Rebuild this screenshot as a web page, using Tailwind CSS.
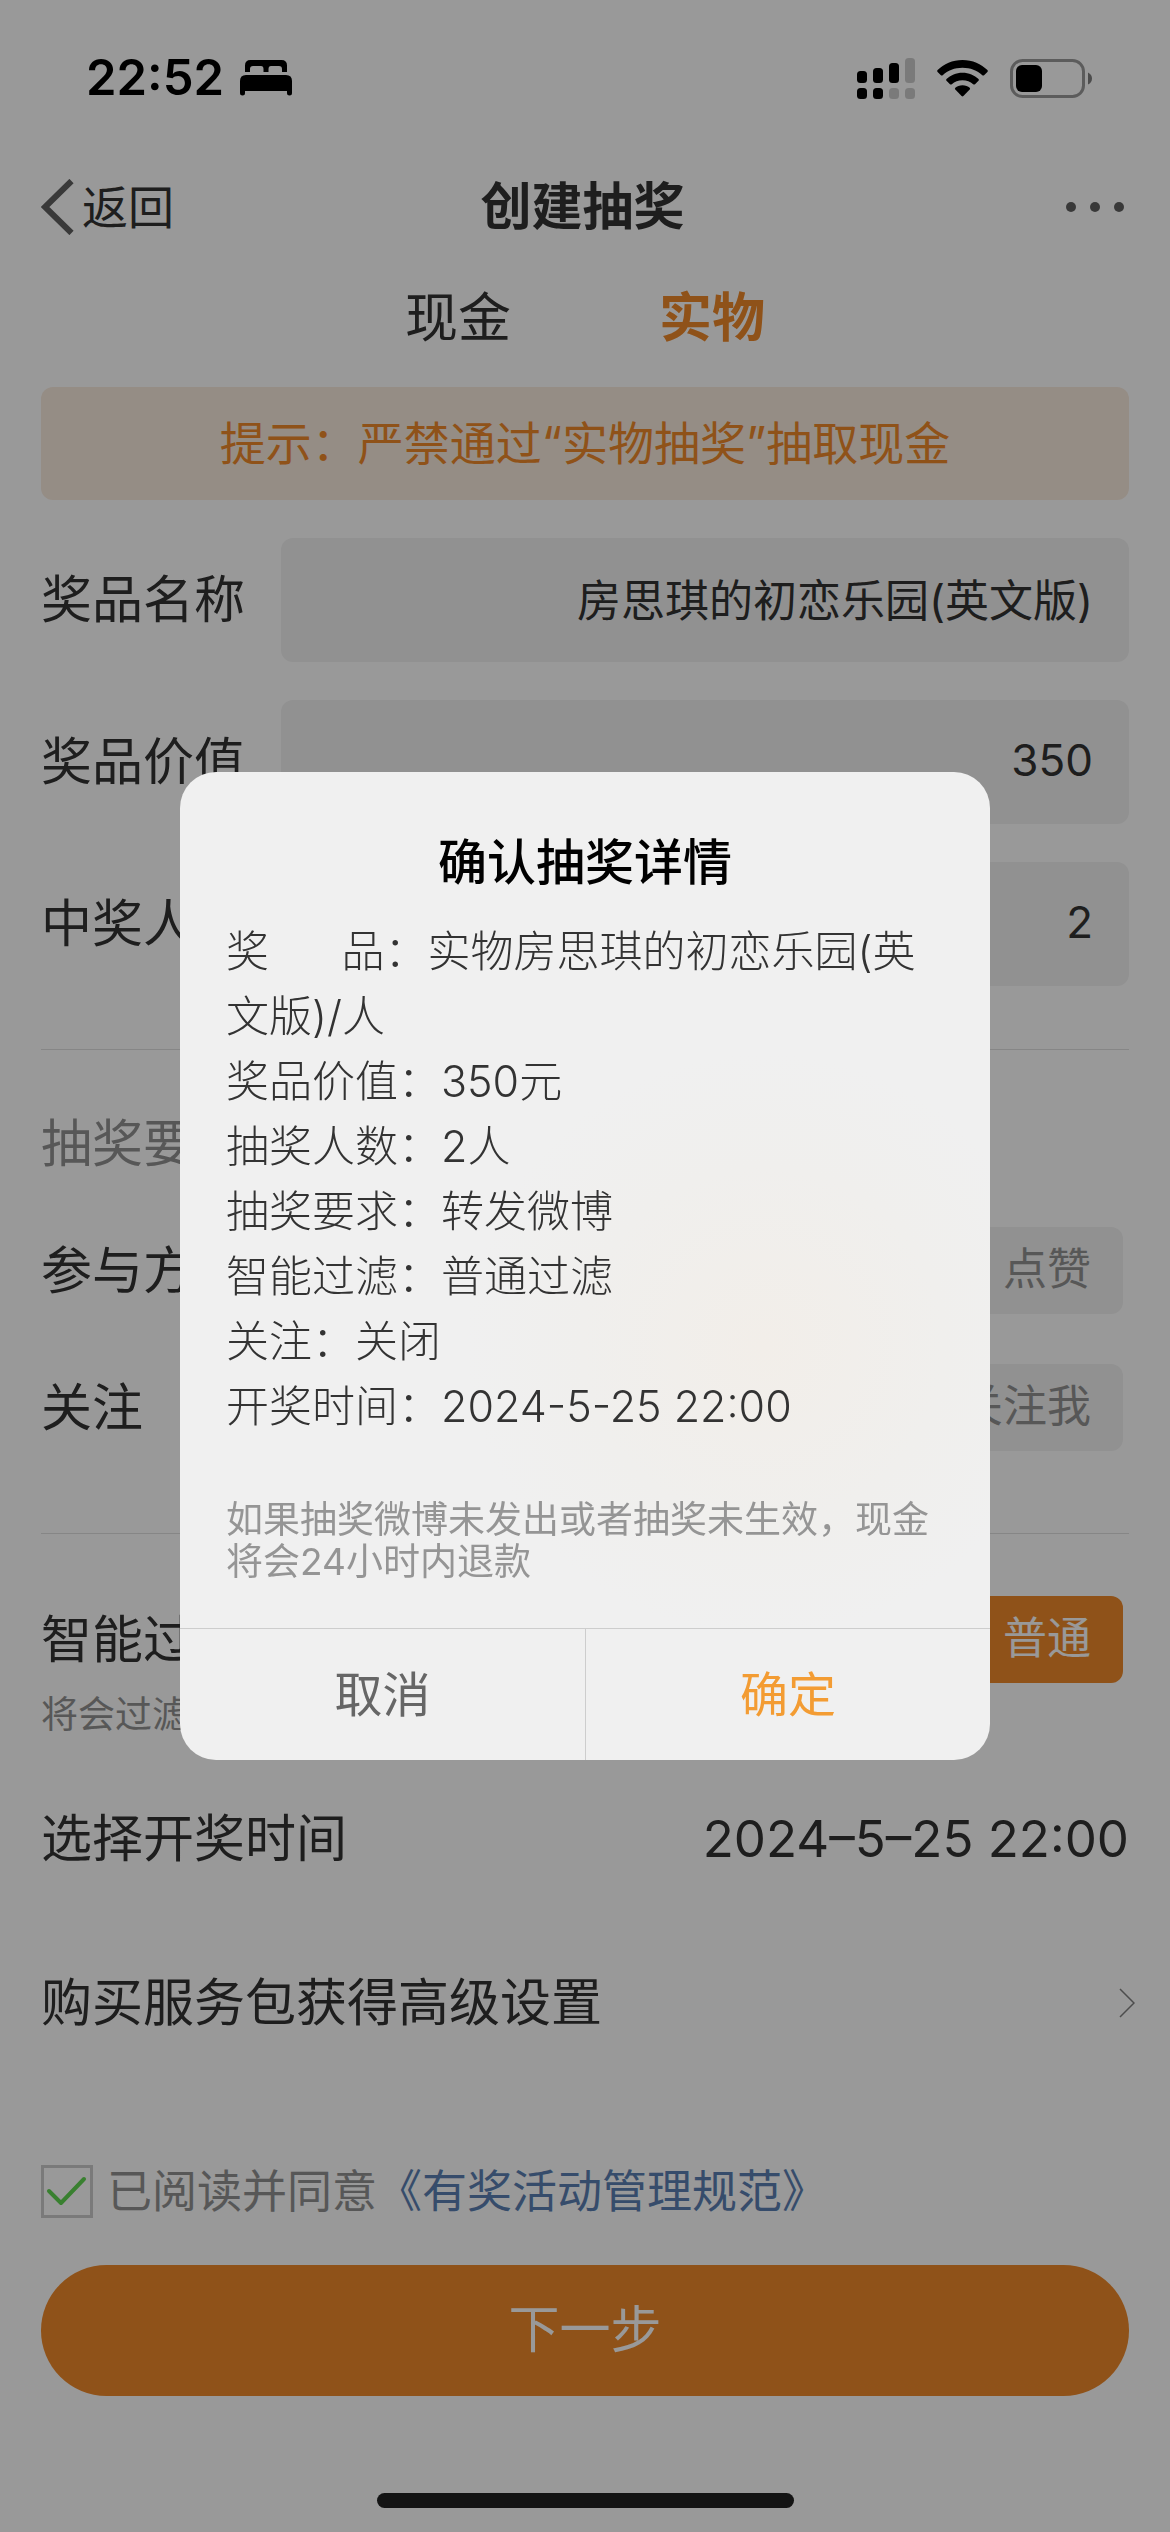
<!DOCTYPE html>
<html lang="zh-CN">
<head>
  <meta charset="UTF-8">
  <meta name="viewport" content="width=device-width, initial-scale=1.0">
  <title>创建抽奖</title>
  <script src="https://cdn.jsdelivr.net/npm/@tailwindcss/browser@4"></script>
</head>
<body class="bg-white text-[#333] font-['Inter','Noto_Sans_CJK_SC',sans-serif]">

  <!-- Status Bar -->
  <div class="h-[156px] pl-[86px] pr-[78px] flex items-center justify-between text-black">
    <div class="flex items-center gap-[16px]">
      <span class="text-[49px] leading-[60px] font-semibold">22:52</span>
      <svg class="w-[52px] h-[36px]" viewBox="0 0 52 36" fill="currentColor">
        <path d="M5 12V5.500Q5 0 10.500 0H41.500Q47 0 47 5.500V12H42V9Q42 6 39 6H31Q28.500 6 28.500 9V12H23.500V9Q23.500 6 21 6H13Q10 6 10 9V12Z"/>
        <path d="M0 21Q0 15 6 15H46Q52 15 52 21V33Q52 35.500 49.500 35.500T47 33V31H5V33Q5 35.500 2.500 35.500T0 33Z"/>
      </svg>
    </div>
    <div class="flex items-center">
      <svg class="w-[58px] h-[41px]" viewBox="0 0 58 41" fill="currentColor">
        <rect x="0" y="13" width="10" height="12" rx="3.500"/>
        <rect x="16" y="10" width="10" height="15" rx="3.500"/>
        <rect x="32" y="5" width="10" height="20" rx="3.500"/>
        <rect x="48" y="0" width="10" height="25" rx="3.500" opacity=".2"/>
        <rect x="0" y="30" width="10" height="11" rx="3.500"/>
        <rect x="16" y="30" width="10" height="11" rx="3.500"/>
        <rect x="32" y="30" width="10" height="11" rx="3.500" opacity=".2"/>
        <rect x="48" y="30" width="10" height="11" rx="3.500" opacity=".2"/>
      </svg>
      <svg class="ml-[22px] w-[51px] h-[37px]" viewBox="0 0 51 37" fill="currentColor">
        <path d="M25.500 0C35.500 0 44.300 3.900 50.400 10.100Q51.200 11 50.400 11.900L47.100 15.200Q46.200 16 45.300 15.200C40.200 10.400 33.300 7.700 25.500 7.700S10.800 10.400 5.700 15.200Q4.800 16 3.900 15.200L.6 11.900Q-.2 11 .6 10.100C6.700 3.900 15.500 0 25.500 0Z"/>
        <path d="M25.500 12.700C31.900 12.700 37.500 15.200 41.500 19Q42.400 19.900 41.500 20.800L38 24.200Q37.100 25 36.200 24.200C33.400 21.700 29.700 20.300 25.500 20.300S17.600 21.700 14.800 24.200Q13.900 25 13 24.200L9.500 20.800Q8.600 19.900 9.500 19C13.500 15.200 19.100 12.700 25.500 12.700Z"/>
        <path d="M25.500 25.200C28.400 25.200 31 26.200 32.700 27.800Q33.500 28.600 32.700 29.500L26.400 36.100Q25.500 37 24.600 36.100L18.300 29.500Q17.500 28.600 18.300 27.800C20 26.200 22.600 25.200 25.500 25.200Z"/>
      </svg>
      <svg class="ml-[22px] w-[82px] h-[39px]" viewBox="0 0 82 39" fill="currentColor">
        <rect x="1.500" y="1.500" width="72" height="36" rx="11" fill="none" stroke="currentColor" stroke-width="3" opacity=".4"/>
        <rect x="6" y="6" width="26" height="27" rx="6"/>
        <path d="M78 13.500Q82 15.500 82 19.500T78 25.500Z" opacity=".5"/>
      </svg>
    </div>
  </div>

  <!-- Nav Bar -->
  <header class="h-[102px] pl-[41px] pr-[46px] grid grid-cols-3 items-center">
    <a href="#" class="flex items-center gap-[8px] text-[46px] leading-[60px]">
      <svg class="w-[33px] h-[56px]" viewBox="0 0 33 56" fill="none" stroke="#606060" stroke-width="6">
        <path d="M30.500 2L4 28L30.500 54"/>
      </svg>
      返回
    </a>
    <h1 class="text-center text-[51px] leading-[60px] font-bold">创建抽奖</h1>
    <button type="button" aria-label="更多" class="justify-self-end flex gap-[14px]">
      <span class="size-[10px] rounded-full bg-[#606060]"></span>
      <span class="size-[10px] rounded-full bg-[#606060]"></span>
      <span class="size-[10px] rounded-full bg-[#606060]"></span>
    </button>
  </header>

  <!-- Tabs -->
  <nav class="h-[120px] flex items-center justify-center gap-[148px] text-[53px] leading-[60px]">
    <button type="button">现金</button>
    <button type="button" class="font-bold text-[#ef892a]">实物</button>
  </nav>

  <!-- Form -->
  <form class="px-[41px] pt-[9px]">
    <p class="h-[113px] flex items-center justify-center rounded-xl bg-[#f9ebde] text-[46px] text-[#ef892a]">提示：严禁通过“实物抽奖”抽取现金</p>

    <div class="mt-[38px] flex flex-col gap-[38px]">
      <div class="flex items-center">
        <label for="prizeName" class="w-[240px] shrink-0 text-[51px] leading-[60px]">奖品名称</label>
        <input type="text" id="prizeName" value="房思琪的初恋乐园(英文版)" class="grow min-w-0 h-[124px] px-[36px] pb-1 rounded-xl bg-[#f2f2f2] text-right text-[44px]">
      </div>
      <div class="flex items-center">
        <label for="prizeValue" class="w-[240px] shrink-0 text-[51px] leading-[60px]">奖品价值</label>
        <input type="text" id="prizeValue" value="350" class="grow min-w-0 h-[124px] px-[36px] pb-1 rounded-xl bg-[#f2f2f2] text-right text-[44px]">
      </div>
      <div class="flex items-center">
        <label for="winners" class="w-[240px] shrink-0 text-[51px] leading-[60px]">中奖人数</label>
        <input type="text" id="winners" value="2" class="grow min-w-0 h-[124px] px-[36px] pb-1 rounded-xl bg-[#f2f2f2] text-right text-[44px]">
      </div>
    </div>

    <hr class="mt-[63px] border-[#e0e0e0]">

    <h2 class="mt-[64px] text-[51px] leading-[60px] text-[#929292]">抽奖要求</h2>
    <div class="mt-[53px] pr-[6px] flex items-center justify-between">
      <span class="text-[51px] leading-[60px]">参与方式</span>
      <button type="button" class="h-[87px] px-[32px] pb-1 rounded-xl bg-[#f2f2f2] text-[44px] text-[#929292]">点赞</button>
    </div>
    <div class="mt-[50px] pr-[6px] flex items-center justify-between">
      <span class="text-[51px] leading-[60px]">关注</span>
      <button type="button" class="h-[87px] px-[32px] pb-1 rounded-xl bg-[#f2f2f2] text-[44px] text-[#929292]">关注我</button>
    </div>

    <hr class="mt-[82px] border-[#e0e0e0]">

    <div class="mt-[62px] pr-[6px] flex items-center justify-between">
      <span class="text-[51px] leading-[60px]">智能过滤</span>
      <button type="button" class="h-[87px] px-[32px] pb-1 rounded-xl bg-[#ef892a] text-[44px] text-white">普通</button>
    </div>
    <p class="mt-[10px] text-[37px] leading-[44px] text-[#929292]">将会过滤</p>

    <div class="mt-[72px] flex items-center justify-between text-[51px] leading-[60px]">
      <span>选择开奖时间</span>
      <button type="button">2024–5–25 22:00</button>
    </div>

    <a href="#" class="mt-[104px] -mr-[6px] flex items-center justify-between text-[51px] leading-[60px]">
      购买服务包获得高级设置
      <svg class="w-[16px] h-[30px]" viewBox="0 0 16 30" fill="none" stroke="#808080" stroke-width="1.500">
        <path d="M1 1L15 15L1 29"/>
      </svg>
    </a>

    <div class="mt-[132px] flex items-center text-[45px] leading-[53px]">
      <span class="relative w-[52px] h-[53px] mr-[14px]">
        <input type="checkbox" id="agree" checked class="block size-full appearance-none border-3 border-[#cccccc]">
        <svg class="absolute inset-0 size-full pointer-events-none" viewBox="0 0 52 53" fill="none" stroke="#60d550" stroke-width="4" stroke-linecap="round" stroke-linejoin="round">
          <path d="M8 26L20 38L43 14"/>
        </svg>
      </span>
      <label for="agree" class="text-[#929292]">已阅读并同意</label>
      <a href="#" class="text-[#5b7fb3]">《有奖活动管理规范》</a>
    </div>

    <button type="button" class="mt-[47px] w-full h-[131px] rounded-full bg-[#ef892a] text-[51px] text-white">下一步</button>
  </form>

  <!-- Home Indicator -->
  <div class="mt-[97px] mb-[20px] mx-auto w-[417px] h-[15px] rounded-full bg-[#222]"></div>

  <!-- Confirm Modal -->
  <div id="confirmModal" class="fixed inset-0 bg-black/40 flex items-center justify-center">
    <div role="dialog" aria-labelledby="confirmTitle" class="w-[810px] max-w-full rounded-[36px] overflow-hidden bg-[#f0f0f0] bg-[radial-gradient(ellipse_at_72%_58%,#f2eee9_0%,#f0efed_22%,#f0f0f0_36%)]">
      <div class="pt-[58px] pb-[45px] px-[46px]">
        <h2 id="confirmTitle" class="text-center text-[49px] leading-[65px] font-medium text-black">确认抽奖详情</h2>
        <div class="mt-[24px] text-[43px] leading-[65px] font-light">
          <p>奖&nbsp;&nbsp;&nbsp;&nbsp;&nbsp;&nbsp;品：实物房思琪的初恋乐园(英文版)/人</p>
          <p>奖品价值：350元</p>
          <p>抽奖人数：2人</p>
          <p>抽奖要求：转发微博</p>
          <p>智能过滤：普通过滤</p>
          <p>关注：关闭</p>
          <p>开奖时间：2024-5-25 22:00</p>
        </div>
        <p class="mt-[60px] text-[37px] leading-[42px] text-[#959595]">如果抽奖微博未发出或者抽奖未生效，现金将会24小时内退款</p>
      </div>
      <div class="h-[132px] grid grid-cols-2 border-t border-[#cdcdcd] text-[48px]">
        <button type="button" id="cancelBtn" class="text-[#666]">取消</button>
        <button type="button" id="okBtn" class="border-l border-[#cdcdcd] text-[#f39c33]">确定</button>
      </div>
    </div>
  </div>

  <script>
    const confirmModal = document.getElementById('confirmModal');

    document.getElementById('cancelBtn').addEventListener('click', () => confirmModal.classList.add('hidden'));
    document.getElementById('okBtn').addEventListener('click', () => confirmModal.classList.add('hidden'));
  </script>

</body>
</html>
